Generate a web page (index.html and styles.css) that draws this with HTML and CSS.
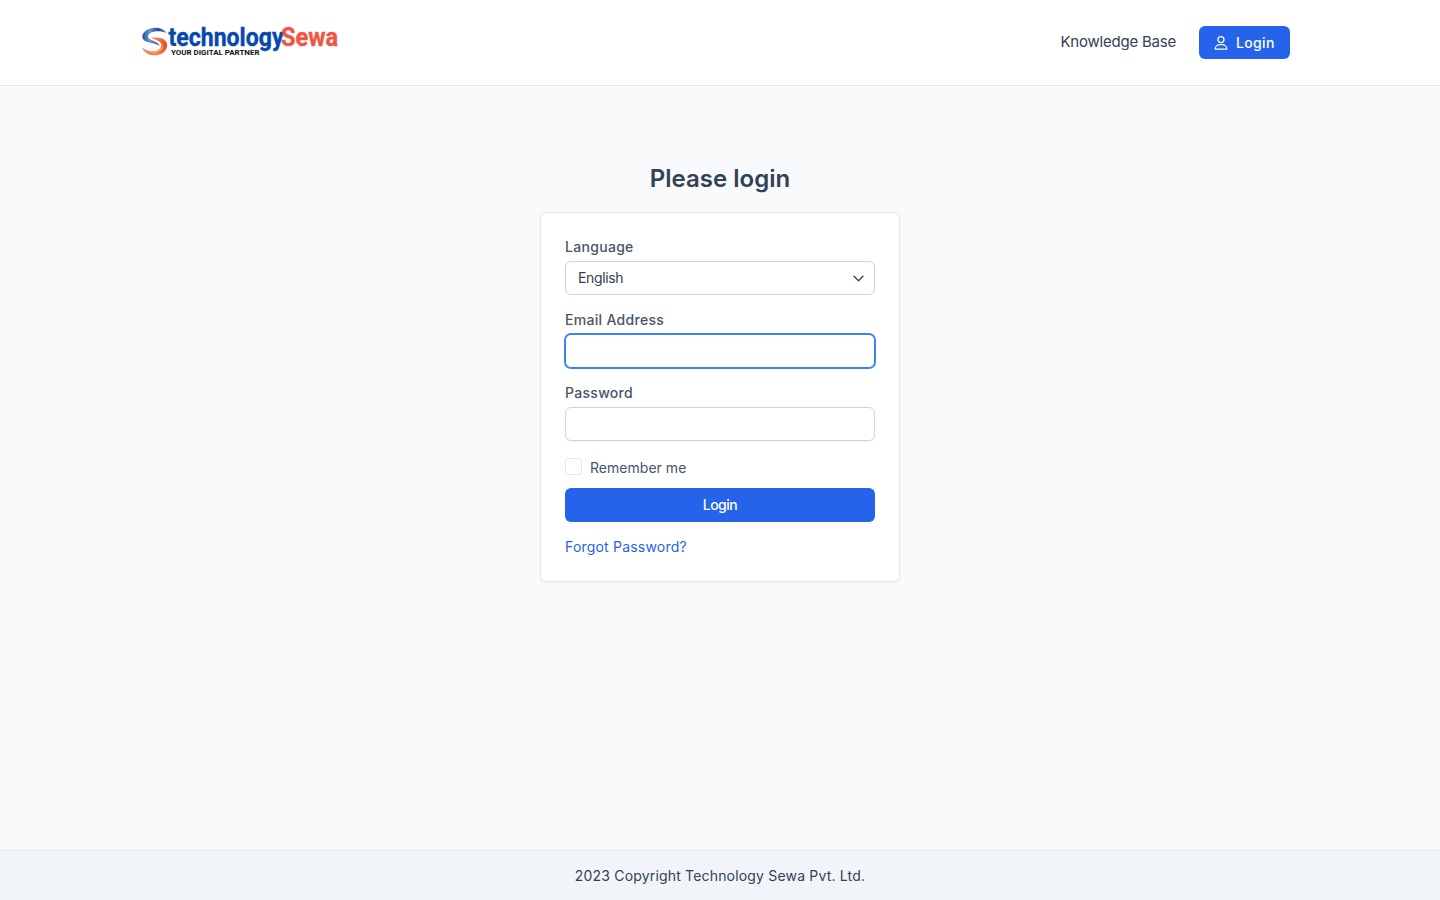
FILE: index.html
```html
<!DOCTYPE html>
<html lang="en">
<head>
<meta charset="utf-8">
<title>Login - Technology Sewa</title>
<link rel="stylesheet" href="styles.css">
</head>
<body>
<header class="header">
  <a class="brand">
    <svg class="logo" width="200" height="36" viewBox="0 0 200 36">
      <defs>
        <linearGradient id="blue" x1="0" y1="0" x2="1" y2="0"><stop offset="0" stop-color="#244f9e"/><stop offset=".3" stop-color="#7298cb"/><stop offset=".65" stop-color="#1d489b"/><stop offset="1" stop-color="#5f86c2"/></linearGradient>
        <linearGradient id="orange" x1="0" y1="0" x2="1" y2="0"><stop offset="0" stop-color="#ef7043"/><stop offset=".55" stop-color="#f58a51"/><stop offset="1" stop-color="#e8452d"/></linearGradient>
      </defs>
      <path fill="url(#blue)" d="M27 8C23 3 16 1.500 10 3.500C4 5.500 1 10 3 14C6 18.500 14 17 20 21C17 15.500 9 15.500 8 12C8 6.500 18 4.500 27 8Z"/>
      <path fill="url(#orange)" d="M2 22C5 31 17 33 24 27C29 22 28 16 22 13.500C18 12 14 12.500 11 12.500C14 15 21 15.500 21.500 20C20.500 27 8 29 2 22Z"/>
      <path fill="#f9ad78" d="M5 26C14 28 21 25 23 20C24 25 16 30.500 5 26Z"/>
      <text class="logo-blue" x="28.500" y="20.800" textLength="115" lengthAdjust="spacingAndGlyphs">technology</text>
      <text class="logo-red" x="141" y="20.800" textLength="57" lengthAdjust="spacingAndGlyphs">Sewa</text>
      <text class="logo-tag" x="31" y="30" textLength="88.500" lengthAdjust="spacingAndGlyphs">YOUR DIGITAL PARTNER</text>
    </svg>
  </a>
  <nav class="nav">
    <a class="nav-link">Knowledge Base</a>
    <a class="nav-login">
      <svg width="14" height="16" viewBox="0 0 14 16" fill="none" stroke="currentColor" stroke-width="1.25" stroke-linejoin="round"><circle cx="7" cy="4.5" r="3"/><path d="M1.2 14.1C1.2 11.4 3.4 9.7 5.800 9.7H8.2C10.6 9.7 12.8 11.4 12.8 14.1Z"/></svg>
      <span>Login</span>
    </a>
  </nav>
</header>
<main class="main">
  <h1 class="title">Please login</h1>
  <form class="card">
    <label class="label">Language</label>
    <div class="field select"><span>English</span>
      <svg width="12" height="8" viewBox="0 0 12 8" fill="none" stroke="#334155" stroke-width="1.3" stroke-linecap="round" stroke-linejoin="round"><path d="M2 2.2L6.500 6.700L11 2.2"/></svg>
    </div>
    <label class="label">Email Address</label>
    <div class="field focused"></div>
    <label class="label">Password</label>
    <div class="field"></div>
    <div class="remember"><span class="checkbox"></span><span>Remember me</span></div>
    <button class="submit" type="button">Login</button>
    <a class="forgot">Forgot Password?</a>
  </form>
</main>
<footer class="footer">2023 Copyright Technology Sewa Pvt. Ltd.</footer>
</body>
</html>
```
FILE: styles.css
```css
* { box-sizing: border-box; }
body {
  margin: 0;
  height: 900px;
  display: flex;
  flex-direction: column;
  background: #f8fafc;
  color: #334155;
  font: 14px/20px Inter, sans-serif;
  letter-spacing: 0.18px;
}
.header {
  height: 86px;
  padding: 0 150px 0 140px;
  display: flex;
  justify-content: space-between;
  align-items: center;
  background: #fff;
  border-bottom: 1px solid #e2e8f0;
}
.brand { height: 36px; }
.logo { display: block; letter-spacing: 0; overflow: visible; }
.logo text { font-family: Roboto, sans-serif; font-weight: 700; }
.logo .logo-blue { font-size: 25px; fill: #0748ad; stroke: #0748ad; stroke-width: 0.4px; }
.logo .logo-red { font-size: 25px; fill: #f35442; stroke: #f35442; stroke-width: 0.4px; }
.logo .logo-tag { font-size: 8px; fill: #111; }
.nav { display: flex; align-items: center; gap: 23px; }
.nav-link { margin-top: -2px; font-size: 15px; letter-spacing: -0.22px; }
.nav-login {
  display: flex;
  align-items: center;
  gap: 8px;
  width: 91px;
  height: 33px;
  padding-left: 15px;
  border-radius: 6px;
  background: #2563eb;
  color: #fff;
  font-weight: 500;
  letter-spacing: 0.35px;
}
.main { flex: 1; display: flex; flex-direction: column; align-items: center; padding-top: 77px; }
.title { margin: 0 0 17px; font-size: 24px; line-height: 32px; font-weight: 600; letter-spacing: 0.03px; }
.card {
  width: 360px;
  height: 370px;
  padding: 24px;
  background: #fff;
  border: 1px solid #e2e8f0;
  border-radius: 6px;
  box-shadow: 0 1px 2px rgba(0, 0, 0, 0.05);
}
.label { display: block; margin-bottom: 4px; color: #475569; font-weight: 500; letter-spacing: 0.3px; }
.field {
  height: 34px;
  margin-bottom: 15px;
  padding: 0 10px 0 12px;
  display: flex;
  align-items: center;
  justify-content: space-between;
  background: #fff;
  border: 1px solid #cbd5e1;
  border-radius: 6px;
  box-shadow: 0 1px 2px rgba(0, 0, 0, 0.05);
  letter-spacing: -0.35px;
}
.select { box-shadow: none; }
.focused { border-color: #3b82f6; box-shadow: 0 0 0 1px #3b82f6; }
.remember { display: flex; gap: 8px; height: 20px; margin: 17px 0 10px; color: #475569; letter-spacing: 0.03px; }
.checkbox { width: 17px; height: 17px; border: 1px solid #e2e8f0; border-radius: 3px; }
.submit {
  display: block;
  width: 100%;
  height: 34px;
  margin-bottom: 15px;
  border: 0;
  border-radius: 6px;
  background: #2563eb;
  color: #fff;
  font: 500 14px/20px Inter, sans-serif;
  letter-spacing: -0.5px;
}
.forgot { color: #2563eb; letter-spacing: 0.2px; }
.footer {
  height: 50px;
  padding-top: 15px;
  text-align: center;
  background: #f1f5f9;
  border-top: 1px solid #e2e8f0;
}
```
